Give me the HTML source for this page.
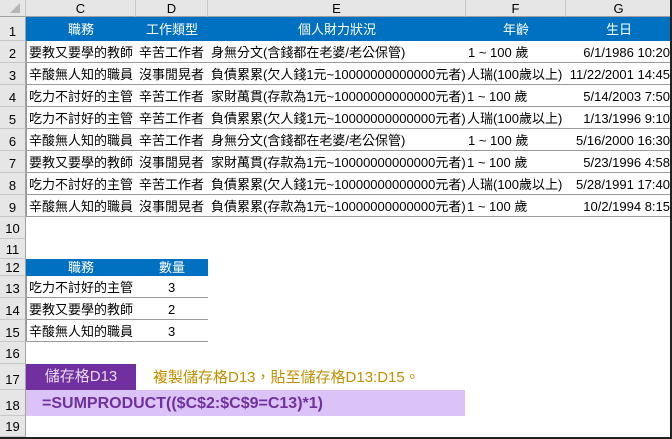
<!DOCTYPE html>
<html><head><meta charset="utf-8"><style>
*{margin:0;padding:0;box-sizing:border-box}
body{width:672px;height:439px;overflow:hidden;background:#fff;position:relative;font-family:"Liberation Sans","Noto Sans CJK TC",sans-serif;font-size:13px;color:#000}
.a{position:absolute;white-space:nowrap}
.rh{position:absolute;left:0;width:26px;background:#e6e6e6;border-bottom:1px solid #c8c8c8;border-right:1px solid #a0a0a0;text-align:center;font-size:13px}
.ch{position:absolute;top:0;height:17px;background:#e6e6e6;border-right:1px solid #c8c8c8;border-bottom:1px solid #a0a0a0;text-align:center;font-size:13px;line-height:17px}
.row{position:absolute;left:26px;height:22px;line-height:23px;border-bottom:1px solid #9a9a9a}
.c{position:absolute;top:0;white-space:nowrap}
.hd{color:#fff}
</style></head><body>
<div class="ch" style="left:0;width:26px"><div style="position:absolute;right:5px;bottom:3px;width:0;height:0;border-left:10px solid transparent;border-bottom:10px solid #b5b5b5"></div></div>
<div class="ch" style="left:26px;width:110px">C</div>
<div class="ch" style="left:136px;width:72px">D</div>
<div class="ch" style="left:208px;width:258px">E</div>
<div class="ch" style="left:466px;width:100px">F</div>
<div class="ch" style="left:566px;width:106px">G</div>

<div class="rh" style="top:17px;height:24px;line-height:30px">1</div>
<div class="rh" style="top:41px;height:22px;line-height:26px">2</div>
<div class="rh" style="top:63px;height:22px;line-height:26px">3</div>
<div class="rh" style="top:85px;height:22px;line-height:26px">4</div>
<div class="rh" style="top:107px;height:22px;line-height:26px">5</div>
<div class="rh" style="top:129px;height:22px;line-height:26px">6</div>
<div class="rh" style="top:151px;height:22px;line-height:26px">7</div>
<div class="rh" style="top:173px;height:22px;line-height:26px">8</div>
<div class="rh" style="top:195px;height:22px;line-height:26px">9</div>
<div class="rh" style="top:217px;height:22px;line-height:24px">10</div>
<div class="rh" style="top:239px;height:20px;line-height:22px">11</div>
<div class="rh" style="top:259px;height:17px;line-height:18px">12</div>
<div class="rh" style="top:276px;height:22px;line-height:26px">13</div>
<div class="rh" style="top:298px;height:22px;line-height:26px">14</div>
<div class="rh" style="top:320px;height:22px;line-height:26px">15</div>
<div class="rh" style="top:342px;height:22px;line-height:24px">16</div>
<div class="rh" style="top:364px;height:26px;line-height:32px">17</div>
<div class="rh" style="top:390px;height:26px;line-height:32px">18</div>
<div class="rh" style="top:416px;height:21px;line-height:22px">19</div>

<div class="a" style="left:26px;top:17px;width:644px;height:24px;background:#0070c0"></div>
<div class="a hd" style="left:26px;top:19px;width:110px;text-align:center">職務</div>
<div class="a hd" style="left:136px;top:19px;width:72px;text-align:center">工作類型</div>
<div class="a hd" style="left:208px;top:19px;width:258px;text-align:center">個人財力狀況</div>
<div class="a hd" style="left:466px;top:19px;width:100px;text-align:center">年齡</div>
<div class="a hd" style="left:566px;top:19px;width:106px;text-align:center">生日</div>

<div class="a" style="left:26px;top:41px;width:1px;height:176px;background:#9a9a9a"></div>

<div class="row" style="top:41px;width:644px"><span class="c" style="left:3px">要教又要學的教師</span><span class="c" style="left:113px">辛苦工作者</span><span class="c" style="left:185px">身無分文(含錢都在老婆/老公保管)</span><span class="c" style="left:442px">1 ~ 100 歲</span><span class="c" style="right:0">6/1/1986 10:20</span></div>
<div class="row" style="top:63px;width:644px"><span class="c" style="left:3px">辛酸無人知的職員</span><span class="c" style="left:113px">沒事閒晃者</span><span class="c" style="left:185px">負債累累(欠人錢1元~10000000000000元者)</span><span class="c" style="left:441px">人瑞(100歲以上)</span><span class="c" style="right:0">11/22/2001 14:45</span></div>
<div class="row" style="top:85px;width:644px"><span class="c" style="left:3px">吃力不討好的主管</span><span class="c" style="left:113px">辛苦工作者</span><span class="c" style="left:185px">家財萬貫(存款為1元~10000000000000元者)</span><span class="c" style="left:441px">1 ~ 100 歲</span><span class="c" style="right:0">5/14/2003 7:50</span></div>
<div class="row" style="top:107px;width:644px"><span class="c" style="left:3px">吃力不討好的主管</span><span class="c" style="left:113px">辛苦工作者</span><span class="c" style="left:185px">負債累累(欠人錢1元~10000000000000元者)</span><span class="c" style="left:441px">人瑞(100歲以上)</span><span class="c" style="right:0">1/13/1996 9:10</span></div>
<div class="row" style="top:129px;width:644px"><span class="c" style="left:3px">辛酸無人知的職員</span><span class="c" style="left:113px">辛苦工作者</span><span class="c" style="left:185px">身無分文(含錢都在老婆/老公保管)</span><span class="c" style="left:442px">1 ~ 100 歲</span><span class="c" style="right:0">5/16/2000 16:30</span></div>
<div class="row" style="top:151px;width:644px"><span class="c" style="left:3px">要教又要學的教師</span><span class="c" style="left:113px">沒事閒晃者</span><span class="c" style="left:185px">家財萬貫(存款為1元~10000000000000元者)</span><span class="c" style="left:441px">1 ~ 100 歲</span><span class="c" style="right:0">5/23/1996 4:58</span></div>
<div class="row" style="top:173px;width:644px"><span class="c" style="left:3px">吃力不討好的主管</span><span class="c" style="left:113px">辛苦工作者</span><span class="c" style="left:185px">負債累累(欠人錢1元~10000000000000元者)</span><span class="c" style="left:441px">人瑞(100歲以上)</span><span class="c" style="right:0">5/28/1991 17:40</span></div>
<div class="row" style="top:195px;width:644px"><span class="c" style="left:3px">辛酸無人知的職員</span><span class="c" style="left:113px">沒事閒晃者</span><span class="c" style="left:185px">負債累累(存款為1元~10000000000000元者)</span><span class="c" style="left:441px">1 ~ 100 歲</span><span class="c" style="right:0">10/2/1994 8:15</span></div>

<div class="a" style="left:26px;top:259px;width:182px;height:17px;background:#0070c0"></div>
<div class="a hd" style="left:26px;top:259px;width:110px;text-align:center;line-height:17px">職務</div>
<div class="a hd" style="left:136px;top:259px;width:72px;text-align:center;line-height:17px">數量</div>
<div class="a" style="left:26px;top:276px;width:1px;height:66px;background:#9a9a9a"></div>
<div class="row" style="top:276px;width:182px"><span class="c" style="left:3px">吃力不討好的主管</span><span class="c" style="left:142px">3</span></div>
<div class="row" style="top:298px;width:182px"><span class="c" style="left:3px">要教又要學的教師</span><span class="c" style="left:142px">2</span></div>
<div class="row" style="top:320px;width:182px"><span class="c" style="left:3px">辛酸無人知的職員</span><span class="c" style="left:142px">3</span></div>

<div class="a" style="left:26px;top:364px;width:110px;height:26px;background:#7030a0;color:#e8d8f0;font-size:15px;text-align:center;line-height:26px">儲存格D13</div>
<div class="a" style="left:153px;top:364px;height:26px;line-height:28px;color:#c09000;font-size:15px">複製儲存格D13，貼至儲存格D13:D15。</div>
<div class="a" style="left:26px;top:390px;width:439px;height:26px;background:#dcc3f7"></div>
<div class="a" style="left:42px;top:390px;line-height:28px;color:#7030a0;font-weight:bold;font-size:16px">=SUMPRODUCT(($C$2:$C$9=C13)*1)</div>

<div class="a" style="left:0;top:437px;width:672px;height:2px;background:#222"></div>
<div class="a" style="left:670px;top:0;width:2px;height:439px;background:#222"></div>
</body></html>
